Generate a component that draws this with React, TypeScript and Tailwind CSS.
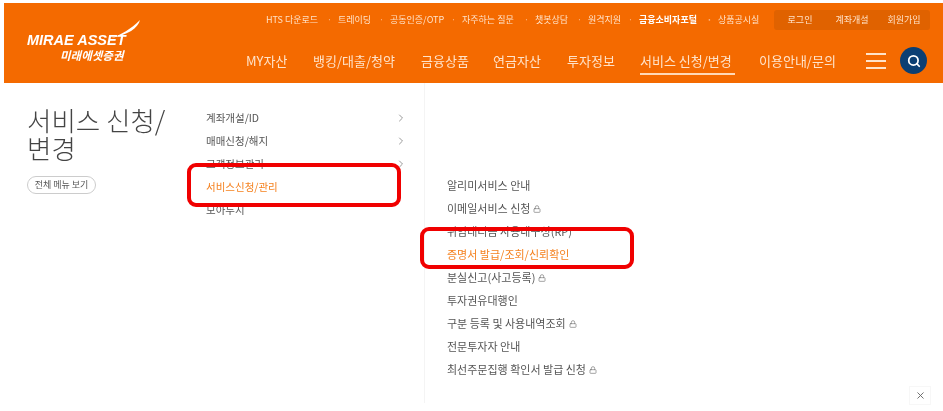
import { ChevronRight, Lock, Search, X } from "lucide-react";

const utilLinks = [
  { label: "HTS 다운로드", w: "w-[72px]" },
  { label: "트레이딩", w: "w-[52px]" },
  { label: "공동인증/OTP", w: "w-[72px]" },
  { label: "자주하는 질문", w: "w-[73px]" },
  { label: "챗봇상담", w: "w-[53px]" },
  { label: "원격지원", w: "w-[51px]" },
  { label: "금융소비자포털", w: "w-[79px]", bold: true },
  { label: "상품공시실", w: "w-[56px]", last: true },
];

const mainNav = [
  { label: "MY자산", w: "w-[67px]" },
  { label: "뱅킹/대출/청약", w: "w-[108px]" },
  { label: "금융상품", w: "w-[72px]" },
  { label: "연금자산", w: "w-[74px]" },
  { label: "투자정보", w: "w-[73px]" },
  { label: "서비스 신청/변경", w: "w-[119px]", active: true },
  { label: "이용안내/문의", w: "w-[107px]" },
];

const sideMenu = [
  { label: "계좌개설/ID", chevron: true },
  { label: "매매신청/해지", chevron: true },
  { label: "고객정보관리", chevron: true },
  { label: "서비스신청/관리", active: true },
  { label: "모아두지" },
];

const subMenu = [
  { label: "알리미서비스 안내" },
  { label: "이메일서비스 신청", lock: true },
  { label: "위임대리금 사용내구성(RP)" },
  { label: "증명서 발급/조회/신뢰확인", active: true },
  { label: "분실신고(사고등록)", lock: true },
  { label: "투자권유대행인" },
  { label: "구분 등록 및 사용내역조회", lock: true },
  { label: "전문투자자 안내" },
  { label: "최선주문집행 확인서 발급 신청", lock: true },
];

function Logo() {
  return (
    <div className="relative w-[114px] h-[42px] mt-[17px] ml-[23px] shrink-0 text-white">
      <svg className="absolute left-[84px] top-0" width="30" height="20" viewBox="0 0 30 20" fill="none">
        <path d="M0 18 C10 15 20 9 29 0 C27 8 17 15 0 18 Z" fill="#fff" />
      </svg>
      <div className="absolute left-0 top-[14px] text-[14.5px] leading-[13px] font-bold italic whitespace-nowrap font-['Liberation_Sans',sans-serif]">
        MIRAE ASSET
      </div>
      <div className="absolute left-[33px] top-[31px] text-[11.5px] leading-[11px] font-bold italic whitespace-nowrap font-['Liberation_Sans','Noto_Sans_CJK_KR',sans-serif]">
        미래에셋증권
      </div>
    </div>
  );
}

function Header() {
  return (
    <header className="h-[80px] bg-[#f46a00] flex text-white blur-[0.4px]">
      <Logo />
      <div className="flex-1 flex flex-col">
        <div className="flex items-start pt-[7px] pl-[125px]">
          <div className="flex items-center h-[20px] text-[9px] text-[#ffe3c9]">
            {utilLinks.map((l) => (
              <span key={l.label} className={`${l.w} relative whitespace-nowrap ${l.bold ? "font-bold text-white" : ""}`}>
                {l.label}
                {!l.last && <span className="absolute right-[6px] top-0 text-[#ffb680]">·</span>}
              </span>
            ))}
          </div>
          <div className="flex items-center h-[20px] w-[156px] rounded-[3px] bg-[#e06200] text-[9px] text-[#ffe3c9]">
            <span className="w-[52px] text-center">로그인</span>
            <span className="w-[52px] text-center">계좌개설</span>
            <span className="w-[52px] text-center">회원가입</span>
          </div>
        </div>
        <nav className="flex items-center mt-[17px] pl-[105px] h-[27px]">
          {mainNav.map((n) => (
            <div key={n.label} className={`${n.w} relative text-[13px] leading-[18px] whitespace-nowrap text-[#ffe3c9]`}>
              {n.label}
              {n.active && <div className="absolute left-0 top-[21px] w-[95px] h-[2px] bg-[#ffd9b8]" />}
            </div>
          ))}
          <div className="flex flex-col gap-[5px] w-[20px]">
            <div className="h-[2px] bg-[#ffe3c9]" />
            <div className="h-[2px] bg-[#ffe3c9]" />
            <div className="h-[2px] bg-[#ffe3c9]" />
          </div>
          <div className="ml-[14px] w-[27px] h-[27px] rounded-full bg-[#0b3f73] flex items-center justify-center">
            <Search size={14} strokeWidth={3} color="#fff" />
          </div>
        </nav>
      </div>
    </header>
  );
}

export default function App() {
  return (
    <div className="relative w-[943px] h-[411px] overflow-hidden bg-white pt-[3px] pl-[4px] font-['Noto_Sans_CJK_KR','Noto_Sans',sans-serif]">
      <Header />
      <div className="flex h-[320px] blur-[0.4px]">
        <div className="w-[179px] pl-[23px] pt-[23px] shrink-0">
          <h1 className="text-[26.5px] leading-[28px] font-light text-[#444] w-[150px]">서비스 신청/변경</h1>
          <button className="mt-[14px] h-[18px] w-[69px] rounded-full border border-[#ccc] text-[9px] leading-[16px] text-[#555]">
            전체 메뉴 보기
          </button>
        </div>
        <div className="w-[242px] border-r border-[#f4f4f4] pt-[23px] pl-[23px] pr-[17px] shrink-0">
          {sideMenu.map((m) => (
            <div key={m.label} className={`h-[23px] flex items-center justify-between text-[10.5px] ${m.active ? "text-[#f58220]" : "text-[#555]"}`}>
              <span>{m.label}</span>
              {m.chevron && <ChevronRight size={12} color="#999" />}
            </div>
          ))}
        </div>
        <div className="pt-[91px] pl-[22px]">
          {subMenu.map((m) => (
            <div key={m.label} className={`h-[23px] flex items-center gap-[3px] text-[11px] ${m.active ? "text-[#f58220]" : "text-[#555]"}`}>
              <span>{m.label}</span>
              {m.lock && <Lock size={8} color="#777" />}
            </div>
          ))}
        </div>
      </div>

      {/* red annotation boxes */}
      <div className="absolute left-[187px] top-[163px] w-[214px] h-[44px] rounded-[9px] border-[4px] border-[#f00000]" />
      <div className="absolute left-[420px] top-[227px] w-[214px] h-[42px] rounded-[9px] border-[4px] border-[#f00000]" />

      <div className="absolute left-[909px] top-[386px] w-[22px] h-[19px] flex items-center justify-center border border-[#f7f7f7]">
        <X size={11} color="#666" />
      </div>
    </div>
  );
}
